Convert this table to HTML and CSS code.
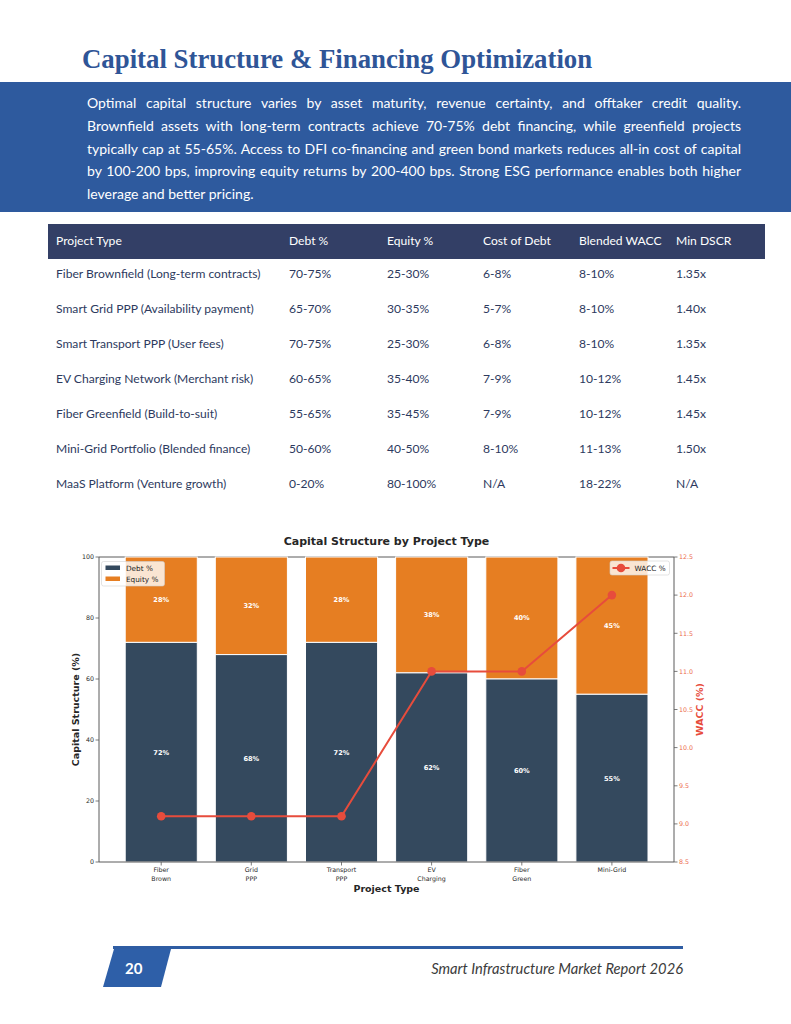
FILE: index.html
```html
<!DOCTYPE html>
<html lang="en">
<head>
    <meta charset="UTF-8">
    <meta name="viewport" content="width=device-width, initial-scale=1.0">
    <title>Capital Structure &amp; Financing Optimization</title>
    <link rel="stylesheet" href="styles.css">
</head>
<body>
    <div class="page">
        <h1 class="page-title">Capital Structure &amp; Financing Optimization</h1>

        <div class="summary-band">
            <p class="summary">
                <span class="line">Optimal capital structure varies by asset maturity, revenue certainty, and offtaker credit quality.</span>
                <span class="line">Brownfield assets with long-term contracts achieve 70-75% debt financing, while greenfield projects</span>
                <span class="line">typically cap at 55-65%. Access to DFI co-financing and green bond markets reduces all-in cost of capital</span>
                <span class="line">by 100-200 bps, improving equity returns by 200-400 bps. Strong ESG performance enables both higher</span>
                <span class="line last">leverage and better pricing.</span>
            </p>
        </div>

        <table class="finance-table">
            <colgroup>
                <col class="col-type">
                <col class="col-debt">
                <col class="col-equity">
                <col class="col-cost">
                <col class="col-wacc">
                <col class="col-dscr">
            </colgroup>
            <thead>
                <tr>
                    <th>Project Type</th>
                    <th>Debt %</th>
                    <th>Equity %</th>
                    <th>Cost of Debt</th>
                    <th>Blended WACC</th>
                    <th>Min DSCR</th>
                </tr>
            </thead>
            <tbody>
                <tr><td>Fiber Brownfield (Long-term contracts)</td><td>70-75%</td><td>25-30%</td><td>6-8%</td><td>8-10%</td><td>1.35x</td></tr>
                <tr><td>Smart Grid PPP (Availability payment)</td><td>65-70%</td><td>30-35%</td><td>5-7%</td><td>8-10%</td><td>1.40x</td></tr>
                <tr><td>Smart Transport PPP (User fees)</td><td>70-75%</td><td>25-30%</td><td>6-8%</td><td>8-10%</td><td>1.35x</td></tr>
                <tr><td>EV Charging Network (Merchant risk)</td><td>60-65%</td><td>35-40%</td><td>7-9%</td><td>10-12%</td><td>1.45x</td></tr>
                <tr><td>Fiber Greenfield (Build-to-suit)</td><td>55-65%</td><td>35-45%</td><td>7-9%</td><td>10-12%</td><td>1.45x</td></tr>
                <tr><td>Mini-Grid Portfolio (Blended finance)</td><td>50-60%</td><td>40-50%</td><td>8-10%</td><td>11-13%</td><td>1.50x</td></tr>
                <tr><td>MaaS Platform (Venture growth)</td><td>0-20%</td><td>80-100%</td><td>N/A</td><td>18-22%</td><td>N/A</td></tr>
            </tbody>
        </table>

        <div class="chart-wrap">
            <!-- viewBox uses page coordinates so the numbers read like the picture -->
            <svg class="chart" width="660" height="380" viewBox="55 520 660 380">
                <text class="chart-title" x="386.5" y="544.5">Capital Structure by Project Type</text>

                <!-- top spine, shows in the gaps -->
                <line x1="99" y1="557" x2="674" y2="557" class="spine"/>

                <!-- equity bars -->
                <g class="bar-equity">
                    <rect x="125.2" y="557" width="72.1" height="85.4"/>
                    <rect x="215.3" y="557" width="72.1" height="97.6"/>
                    <rect x="305.5" y="557" width="72.1" height="85.4"/>
                    <rect x="395.6" y="557" width="72.1" height="115.9"/>
                    <rect x="485.8" y="557" width="72.1" height="122"/>
                    <rect x="575.9" y="557" width="72.1" height="137.3"/>
                </g>
                <!-- debt bars -->
                <g class="bar-debt">
                    <rect x="125.2" y="642.4" width="72.1" height="219.6"/>
                    <rect x="215.3" y="654.6" width="72.1" height="207.4"/>
                    <rect x="305.5" y="642.4" width="72.1" height="219.6"/>
                    <rect x="395.6" y="672.9" width="72.1" height="189.1"/>
                    <rect x="485.8" y="679" width="72.1" height="183"/>
                    <rect x="575.9" y="694.3" width="72.1" height="167.7"/>
                </g>

                <g class="bar-label">
                    <text x="161.2" y="602">28%</text>
                    <text x="251.3" y="608">32%</text>
                    <text x="341.5" y="602">28%</text>
                    <text x="431.6" y="617">38%</text>
                    <text x="521.8" y="620">40%</text>
                    <text x="611.9" y="628">45%</text>
                    <text x="161.2" y="754.5">72%</text>
                    <text x="251.3" y="760.5">68%</text>
                    <text x="341.5" y="754.5">72%</text>
                    <text x="431.6" y="770">62%</text>
                    <text x="521.8" y="773">60%</text>
                    <text x="611.9" y="780.5">55%</text>
                </g>

                <!-- WACC line -->
                <polyline class="wacc-line" points="161.2,816.3 251.3,816.3 341.5,816.3 431.6,671.4 521.8,671.4 611.9,595.1"/>
                <g class="wacc-dot">
                    <circle cx="161.2" cy="816.3" r="4.3"/>
                    <circle cx="251.3" cy="816.3" r="4.3"/>
                    <circle cx="341.5" cy="816.3" r="4.3"/>
                    <circle cx="431.6" cy="671.4" r="4.3"/>
                    <circle cx="521.8" cy="671.4" r="4.3"/>
                    <circle cx="611.9" cy="595.1" r="4.3"/>
                </g>

                <!-- spines -->
                <line x1="99" y1="557" x2="99" y2="862" class="spine"/>
                <line x1="674" y1="557" x2="674" y2="862" class="spine"/>
                <line x1="99" y1="862" x2="674" y2="862" class="spine"/>

                <!-- left ticks -->
                <g class="tick">
                    <line x1="95.5" y1="862" x2="99" y2="862"/>
                    <line x1="95.5" y1="801" x2="99" y2="801"/>
                    <line x1="95.5" y1="740" x2="99" y2="740"/>
                    <line x1="95.5" y1="679" x2="99" y2="679"/>
                    <line x1="95.5" y1="618" x2="99" y2="618"/>
                    <line x1="95.5" y1="557" x2="99" y2="557"/>
                </g>
                <g class="tick-label left">
                    <text x="94" y="864.3">0</text>
                    <text x="94" y="803.3">20</text>
                    <text x="94" y="742.3">40</text>
                    <text x="94" y="681.3">60</text>
                    <text x="94" y="620.3">80</text>
                    <text x="94" y="559.3">100</text>
                </g>

                <!-- right ticks -->
                <g class="tick">
                    <line x1="674" y1="862" x2="677.5" y2="862"/>
                    <line x1="674" y1="823.9" x2="677.5" y2="823.9"/>
                    <line x1="674" y1="785.8" x2="677.5" y2="785.8"/>
                    <line x1="674" y1="747.6" x2="677.5" y2="747.6"/>
                    <line x1="674" y1="709.5" x2="677.5" y2="709.5"/>
                    <line x1="674" y1="671.4" x2="677.5" y2="671.4"/>
                    <line x1="674" y1="633.3" x2="677.5" y2="633.3"/>
                    <line x1="674" y1="595.1" x2="677.5" y2="595.1"/>
                    <line x1="674" y1="557" x2="677.5" y2="557"/>
                </g>
                <g class="tick-label right">
                    <text x="679" y="864.3">8.5</text>
                    <text x="679" y="826.2">9.0</text>
                    <text x="679" y="788.1">9.5</text>
                    <text x="679" y="749.9">10.0</text>
                    <text x="679" y="711.8">10.5</text>
                    <text x="679" y="673.7">11.0</text>
                    <text x="679" y="635.6">11.5</text>
                    <text x="679" y="597.4">12.0</text>
                    <text x="679" y="559.3">12.5</text>
                </g>

                <!-- x ticks -->
                <g class="tick">
                    <line x1="161.2" y1="862" x2="161.2" y2="865.5"/>
                    <line x1="251.3" y1="862" x2="251.3" y2="865.5"/>
                    <line x1="341.5" y1="862" x2="341.5" y2="865.5"/>
                    <line x1="431.6" y1="862" x2="431.6" y2="865.5"/>
                    <line x1="521.8" y1="862" x2="521.8" y2="865.5"/>
                    <line x1="611.9" y1="862" x2="611.9" y2="865.5"/>
                </g>
                <g class="tick-label bottom">
                    <text x="161.2" y="872">Fiber</text>
                    <text x="161.2" y="880.5">Brown</text>
                    <text x="251.3" y="872">Grid</text>
                    <text x="251.3" y="880.5">PPP</text>
                    <text x="341.5" y="872">Transport</text>
                    <text x="341.5" y="880.5">PPP</text>
                    <text x="431.6" y="872">EV</text>
                    <text x="431.6" y="880.5">Charging</text>
                    <text x="521.8" y="872">Fiber</text>
                    <text x="521.8" y="880.5">Green</text>
                    <text x="611.9" y="872">Mini-Grid</text>
                </g>

                <text class="axis-title" x="386.5" y="891.5">Project Type</text>
                <text class="axis-title" transform="translate(78.5 709.5) rotate(-90)">Capital Structure (%)</text>
                <text class="axis-title wacc" transform="translate(703 709.5) rotate(-90)">WACC (%)</text>

                <!-- legends -->
                <rect class="legend-box" x="101.5" y="561.5" width="63" height="24.5" rx="2"/>
                <rect x="105.5" y="565.5" width="14.5" height="4.5" fill="#34495e"/>
                <rect x="105.5" y="576.5" width="14.5" height="4.5" fill="#e67e22"/>
                <text class="legend-text" x="126" y="570.6">Debt %</text>
                <text class="legend-text" x="126" y="581.6">Equity %</text>

                <rect class="legend-box" x="610" y="561" width="59.5" height="14" rx="2"/>
                <line x1="612.5" y1="568" x2="629.5" y2="568" class="wacc-line"/>
                <circle cx="621" cy="568" r="4.3" fill="#e74c3c"/>
                <text class="legend-text" x="634.5" y="570.6">WACC %</text>
            </svg>
        </div>

        <div class="footer">
            <div class="footer-rule"></div>
            <div class="footer-row">
                <div class="page-num">20</div>
                <div class="footer-title">Smart Infrastructure Market Report 2026</div>
            </div>
        </div>
    </div>
</body>
</html>
```

FILE: styles.css
```css
body {
    margin: 0;
    padding: 0;
    background-color: #fff;
    font-family: Lato, "Open Sans", sans-serif;
}

.page {
    width: 791px;
    height: 1024px;
    padding-top: 36px;
    box-sizing: border-box;
}

.page-title {
    margin: 0 0 0 82px;
    font-family: "Liberation Serif", serif;
    font-size: 26.8px;
    line-height: 46px;
    font-weight: bold;
    color: #2f5597;
}

.summary-band {
    background-color: #2e5a9e;
    padding: 10px 50px 6px 87px;
}

.summary {
    margin: 0;
    color: #fff;
    font-size: 14px;
    line-height: 22.8px;
}

.summary .line {
    display: block;
    text-align: justify;
    text-align-last: justify;
}

.summary .line.last {
    text-align-last: left;
}

.finance-table {
    margin: 12px 0 0 48px;
    width: 717px;
    border-collapse: collapse;
    table-layout: fixed;
    font-size: 12.1px;
}

.col-type { width: 241px; }
.col-debt { width: 98px; }
.col-equity { width: 96px; }
.col-cost { width: 96px; }
.col-wacc { width: 97px; }
.col-dscr { width: 89px; }

.finance-table th {
    background-color: #333f66;
    color: #fff;
    font-weight: normal;
    text-align: left;
    height: 33px;
    padding: 0 0 2px 8px;
}

.finance-table td {
    color: #2d3a5e;
    height: 30px;
    padding: 0 0 5px 8px;
}

.finance-table th + th,
.finance-table td + td {
    padding-left: 0;
}

.chart-wrap {
    margin: 16px 0 0 55px;
    height: 380px;
}

.chart {
    display: block;
    font-family: "DejaVu Sans", sans-serif;
}

.chart-title {
    font-size: 11px;
    font-weight: bold;
    fill: #262626;
    text-anchor: middle;
}

.spine {
    stroke: #5a5a5a;
    stroke-width: 1;
}

.bar-equity rect {
    fill: #e67e22;
    stroke: #fff;
    stroke-width: 1;
}

.bar-debt rect {
    fill: #34495e;
    stroke: #fff;
    stroke-width: 1;
}

.bar-label text {
    font-size: 6.6px;
    font-weight: bold;
    fill: #fff;
    text-anchor: middle;
}

.wacc-line {
    fill: none;
    stroke: #e74c3c;
    stroke-width: 2;
}

.wacc-dot circle {
    fill: #e74c3c;
}

.tick line {
    stroke: #5a5a5a;
    stroke-width: 0.8;
}

.tick-label text {
    font-size: 6.3px;
    fill: #2a2a2a;
}

.tick-label.left text {
    text-anchor: end;
}

.tick-label.right text {
    fill: #ec6a4c;
}

.tick-label.bottom text {
    text-anchor: middle;
}

.axis-title {
    font-size: 9.5px;
    font-weight: bold;
    fill: #262626;
    text-anchor: middle;
}

.axis-title.wacc {
    fill: #e74c3c;
}

.legend-box {
    fill: #fff;
    fill-opacity: 0.8;
    stroke: #d0d0d0;
    stroke-width: 0.6;
}

.legend-text {
    font-size: 7.3px;
    fill: #262626;
}

.footer {
    margin: 46px 108px 0 103px;
}

.footer-rule {
    height: 3px;
    margin-left: 10px;
    background-color: #2f5da3;
}

.footer-row {
    display: flex;
    align-items: center;
}

.page-num {
    width: 68px;
    height: 38px;
    background-color: #2e5fa8;
    clip-path: polygon(11px 0, 100% 0, calc(100% - 10px) 100%, 0 100%);
    color: #fff;
    font-weight: bold;
    font-size: 15px;
    line-height: 38px;
    padding-left: 22px;
    box-sizing: border-box;
}

.footer-title {
    margin-left: auto;
    font-style: italic;
    font-size: 14.7px;
    color: #3b3b3b;
}
```
